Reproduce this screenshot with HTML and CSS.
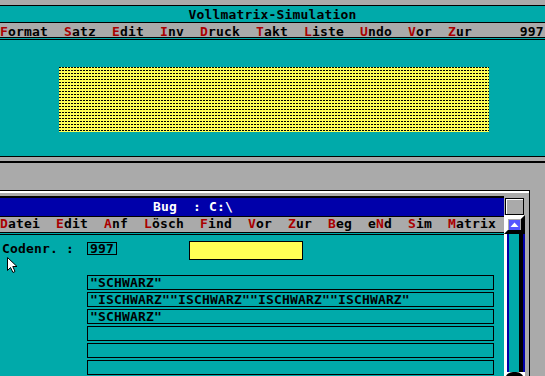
FILE: index.html
```html
<!DOCTYPE html>
<html lang="de">
<head>
<meta charset="utf-8">
<title>Vollmatrix-Simulation</title>
<link rel="stylesheet" href="styles.css">
</head>
<body>
<div class="screen">
  <div class="topgap"></div>
  <div class="titlebar">Vollmatrix-Simulation</div>
  <div class="menu top-menu"><span class="hk">F</span>ormat  <span class="hk">S</span>atz  <span class="hk">E</span>dit  <span class="hk">I</span>nv  <span class="hk">D</span>ruck  <span class="hk">T</span>akt  <span class="hk">L</span>iste  <span class="hk">U</span>ndo  <span class="hk">V</span>or  <span class="hk">Z</span>ur      997</div>
  <div class="canvas"><div class="matrix"></div></div>
  <div class="status"></div>
  <div class="desk">
    <div class="bug">
      <div class="bug-inner">
        <div class="bug-left">
          <div class="bug-title">Bug  : C:\</div>
          <div class="menu bug-menu"><span class="hk">D</span>atei  <span class="hk">E</span>dit  <span class="hk">A</span>nf  <span class="hk">L</span>ösch  <span class="hk">F</span>ind  <span class="hk">V</span>or  <span class="hk">Z</span>ur  <span class="hk">B</span>eg  e<span class="hk">N</span>d  <span class="hk">S</span>im  <span class="hk">M</span>atrix</div>
          <div class="form">
            <div class="code-row">
              <span class="label">Codenr. :</span>
              <span class="codebox">997</span>
              <span class="yellowbox"></span>
            </div>
            <div class="fields">
              <div class="field">"SCHWARZ"</div>
              <div class="field">"ISCHWARZ""ISCHWARZ""ISCHWARZ""ISCHWARZ"</div>
              <div class="field">"SCHWARZ"</div>
              <div class="field"></div>
              <div class="field"></div>
              <div class="field"></div>
              <div class="field"></div>
            </div>
          </div>
        </div>
        <div class="side">
          <div class="closebox"></div>
          <svg class="upbtn" width="21" height="19" viewBox="0 0 21 19">
            <rect width="21" height="19" fill="#aaaaaa"/>
            <polygon points="0,0 21,0 17,4 4,4 4,15 0,19" fill="#ffffff"/>
            <polygon points="21,0 21,19 0,19 4,15 17,15 17,4" fill="#000000"/>
            <rect x="5" y="5" width="11" height="10" fill="#5555ff"/>
            <polygon points="6.5,12 10.5,7.5 14.5,12" fill="#ffffff"/>
          </svg>
          <div class="track"></div>
          <div class="downbtn"><div class="downcap"></div></div>
        </div>
      </div>
    </div>
  </div>
  <svg class="cursor" width="12" height="17" viewBox="0 0 12 17">
    <polygon points="0.5,0.5 0.5,13.5 3.5,10.5 6,15.5 8,14.5 5.8,9.5 10,9.5" fill="#ffffff" stroke="#000000" stroke-width="1"/>
  </svg>
</div>
</body>
</html>
```
FILE: styles.css
```css
* {
  box-sizing: border-box;
}

html, body {
  margin: 0;
  padding: 0;
  background: #aaaaaa;
}

.screen {
  position: relative;
  width: 545px;
  height: 376px;
  overflow: hidden;
  background: #aaaaaa;
  font-family: "DejaVu Sans Mono", "Liberation Mono", monospace;
  font-weight: bold;
  font-size: 13px;
  letter-spacing: 0.17px;
  color: #000000;
}

.topgap {
  height: 6px;
  background: #aaaaaa;
  border-bottom: 1px solid #000000;
}

.titlebar {
  height: 17px;
  background: #00aaaa;
  border-bottom: 1px solid #000000;
  text-align: center;
  line-height: 17px;
  white-space: pre;
}

.menu {
  background: #aaaaaa;
  white-space: pre;
  color: #000000;
}

.hk {
  color: #aa0000;
}

.top-menu {
  height: 14px;
  line-height: 17px;
}

.canvas {
  height: 120px;
  background: #00aaaa;
  border-top: 3px double #000000;
  border-bottom: 1px solid #000000;
  padding: 27px 0 0 59px;
}

.matrix {
  width: 430px;
  height: 65px;
  background-color: #000000;
  background-image:
    linear-gradient(to right, transparent 2px, #ffff55 2px),
    linear-gradient(to bottom, transparent 1px, #ffff55 1px);
  background-size: 3px 3px;
}

.status {
  height: 6px;
  background: #aaaaaa;
  border-bottom: 2px solid #000000;
}

.desk {
  padding-top: 27px;
  background: #aaaaaa;
}

.bug {
  width: 530px;
  border-top: 1px solid #000000;
  border-right: 1px solid #000000;
  background: #aaaaaa;
}

.bug-inner {
  display: flex;
  border-top: 2px solid #ffffff;
  padding: 3px 4px 0 0;
}

.bug-left {
  width: 504px;
  display: flex;
  flex-direction: column;
}

.bug-title {
  height: 21px;
  background: #0000aa;
  border-top: 2px solid #000000;
  border-bottom: 1px solid #000000;
  color: #ffffff;
  line-height: 18px;
  padding-left: 153px;
  white-space: pre;
}

.bug-menu {
  height: 15px;
  line-height: 14px;
}

.form {
  height: 160px;
  background: #00aaaa;
  border-top: 3px double #000000;
  padding-top: 6px;
}

.code-row {
  display: flex;
  align-items: flex-start;
  height: 19px;
}

.label {
  width: 87px;
  padding-left: 2px;
  margin-top: 1px;
  line-height: 13px;
  white-space: pre;
}

.codebox {
  width: 30px;
  height: 13px;
  margin-top: 1px;
  border: 1px solid #000000;
  padding: 0 2px;
  line-height: 11px;
}

.yellowbox {
  width: 114px;
  height: 19px;
  margin-left: 72px;
  background: #ffff55;
  border: 1px solid #000000;
}

.fields {
  margin: 15px 0 0 87px;
  display: flex;
  flex-direction: column;
  gap: 2px;
}

.field {
  width: 407px;
  height: 15px;
  border: 1px solid #000000;
  padding-left: 2px;
  line-height: 13px;
  white-space: pre;
}

.side {
  width: 21px;
  display: flex;
  flex-direction: column;
}

.closebox {
  width: 19px;
  height: 17px;
  margin: 2px 0 0 1px;
  background: #aaaaaa;
  border: 1px solid #000000;
  box-shadow: inset 1px 1px 0 #ffffff;
}

.upbtn {
  display: block;
}

.track {
  height: 138px;
  background: linear-gradient(to right,
    #ffffff 0, #ffffff 3px,
    #0000aa 3px, #0000aa 5px,
    #00aaaa 5px, #00aaaa 15px,
    #000000 15px, #000000 19px,
    #0000aa 19px, #0000aa 21px);
}

.downbtn {
  height: 12px;
  background: #ffffff;
}

.downcap {
  height: 12px;
  margin: 0 1px;
  background: #000000;
  border-radius: 8px 8px 0 0;
}

.cursor {
  position: absolute;
  left: 7px;
  top: 257px;
}
```
